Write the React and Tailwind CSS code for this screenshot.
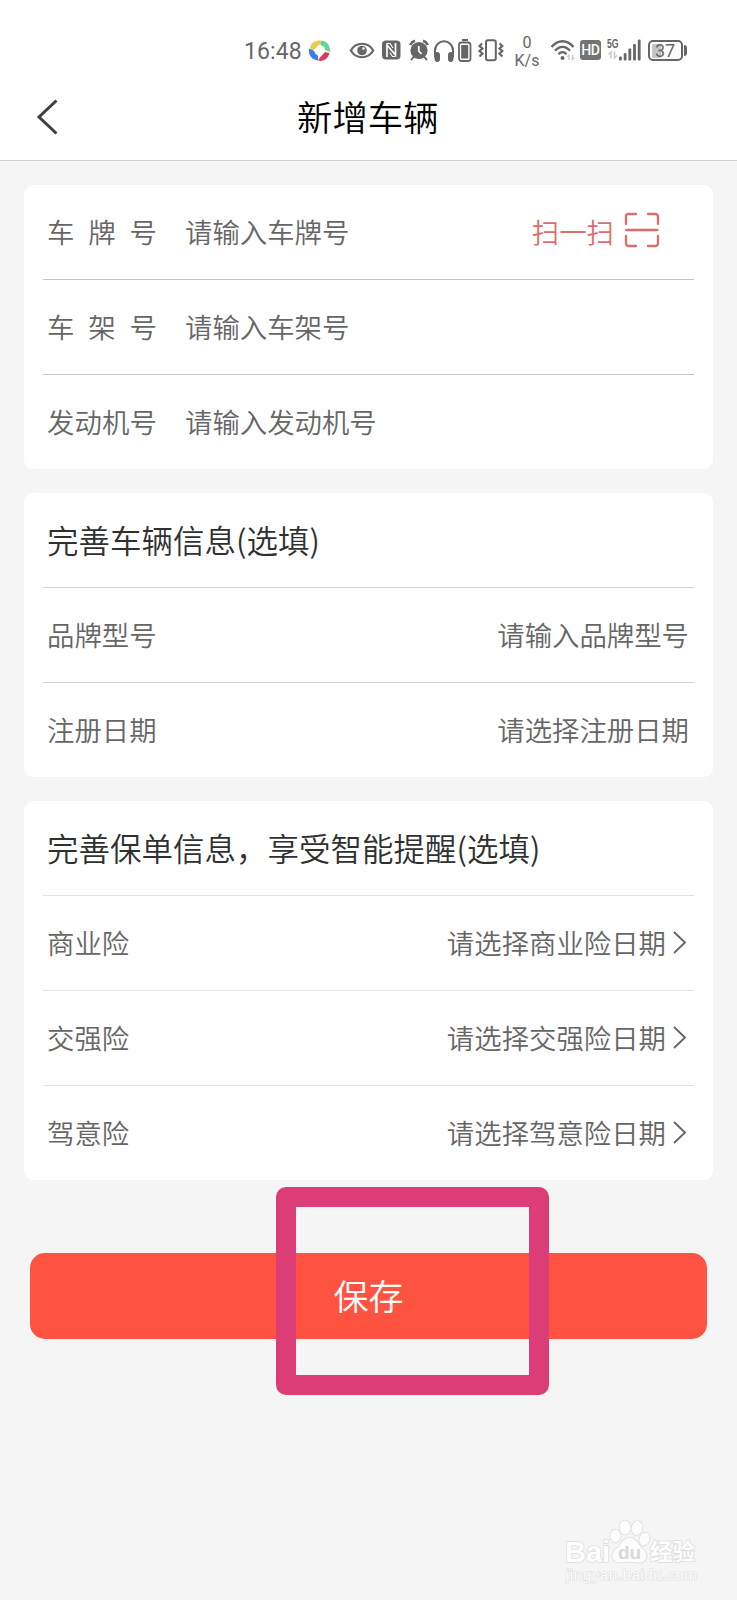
import React from 'react';

const StatusBar = () => {
  return (
    <div className="flex h-[80px] items-start pl-[244px] pt-[35px] font-[Roboto,sans-serif] font-normal text-[#666666]">
      <span className="mt-[3px] w-[64px] text-[23px] leading-[27px] tracking-[0.1px]">16:48</span>

      {/* app notification */}
      <svg className="mt-[4px]" width="24" height="24" viewBox="0 0 24 24">
        <path d="M2 9C3 3 8 1 14 1.500L11 7L5 11Z" fill="#ecc94f" />
        <path d="M14 1.500C20 3 22 7 22 13L17 11L12 5Z" fill="#62d493" />
        <path d="M1 9.500C0 16 4 21 10 21.500L10 17L5 11Z" fill="#3c7de8" />
        <path d="M10 21.500C15 23 20 20 21.500 14L17 13L13 17Z" fill="#dc3b5c" />
        <path d="M11 5.500L16.500 8L17 12.500L13 17.500L7.500 15L6.500 10.500Z" fill="#fff" />
      </svg>

      {/* eye */}
      <svg className="ml-[17px] mt-[7px]" width="26" height="17" viewBox="0 0 26 17" fill="none" stroke="currentColor">
        <path d="M1.800 8.500C7 -0.500 19 -0.500 24.200 8.500C19 17.500 7 17.500 1.800 8.500Z" strokeWidth="2.200" />
        <circle cx="13" cy="8.500" r="4.800" fill="currentColor" stroke="none" />
        <circle cx="14.500" cy="6.500" r="1.300" fill="#fff" stroke="none" />
      </svg>

      {/* nfc */}
      <svg className="ml-[7px] mt-[5px]" width="19" height="20" viewBox="0 0 19 20">
        <rect x="0" y="0.500" width="18.500" height="19" rx="4" fill="currentColor" />
        <path d="M5 17V5L13.500 15V3" fill="none" stroke="#fff" strokeWidth="1.700" />
        <path d="M5 3.500H8L11 8M13.500 16.500H10.500L7.800 12.500" fill="none" stroke="#fff" strokeWidth="1.100" />
      </svg>

      {/* alarm */}
      <svg className="ml-[8px] mt-[4px]" width="20" height="22" viewBox="0 0 20 22" stroke="currentColor" fill="none">
        <circle cx="10" cy="11.500" r="8.600" fill="currentColor" stroke="none" />
        <path d="M1.200 6A8 8 0 0 1 6 1.800M14 1.800A8 8 0 0 1 18.800 6" strokeWidth="2.600" />
        <path d="M4.500 18L2.500 20.500M15.500 18L17.500 20.500" strokeWidth="2" strokeLinecap="round" />
        <path d="M9.800 7V12L12.500 15" stroke="#fff" strokeWidth="1.700" />
      </svg>

      {/* headphones */}
      <svg className="ml-[4px] mt-[4px]" width="22" height="24" viewBox="0 0 22 24" fill="none" stroke="currentColor">
        <path d="M2 18V12C2 -1 20 -1 20 12V18" strokeWidth="2" />
        <rect x="2" y="13.500" width="4.500" height="9" rx="2" fill="currentColor" />
        <rect x="15.500" y="13.500" width="4.500" height="9" rx="2" fill="currentColor" />
      </svg>

      {/* device battery */}
      <svg className="ml-[3px] mt-[4px]" width="14" height="24" viewBox="0 0 14 24" fill="none" stroke="currentColor">
        <path d="M4 1H10" strokeWidth="2" />
        <rect x="1" y="3.500" width="11.500" height="18.500" rx="2.500" strokeWidth="1.800" />
        <rect x="3.200" y="6" width="7" height="13.500" fill="currentColor" stroke="none" />
      </svg>

      {/* vibrate */}
      <svg className="ml-[6px] mt-[4px]" width="26" height="23" viewBox="0 0 26 23" fill="none" stroke="currentColor">
        <rect x="8" y="1.200" width="9.800" height="20" rx="2" strokeWidth="2" />
        <path d="M4 4.500L1.500 7L4.500 9.500L1.500 12L4.500 14.500L1.500 17.500" strokeWidth="2.200" />
        <path d="M21.500 4.500L24.300 7L21.500 9.500L24.300 12L21.500 14.500L24.300 17.500" strokeWidth="2.200" />
      </svg>

      <div className="ml-[6px] flex w-[34px] flex-col items-center text-[16px] leading-[18px]">
        <span className="-mt-[1px]">0</span>
        <span>K/s</span>
      </div>

      {/* wifi */}
      <svg className="ml-[6px] mt-[4px]" width="26" height="23" viewBox="0 0 26 23" fill="none" stroke="currentColor" strokeWidth="2.300">
        <path d="M1.500 8C8 0.300 17 0.300 23.500 8" />
        <path d="M5 11.800C9.500 6.500 15.500 6.500 20 11.800" />
        <path d="M8.500 15.300C11 12.500 14 12.500 16.500 15.300" />
        <circle cx="12.500" cy="19" r="2" fill="currentColor" stroke="none" />
        <path d="M19 21V16L17 18M22.500 15.500V20.500L24.500 18.500" stroke="#c9c9c9" strokeWidth="1.300" />
      </svg>

      <div className="ml-[4px] mt-[5px] flex h-[20px] w-[20.500px] items-center justify-center rounded-[3px] bg-[#747474] text-[14px] font-medium tracking-[-0.500px] text-white">
        HD
      </div>

      {/* 5G signal */}
      <div className="ml-[6px] mt-[3px] w-[12px]">
        <div className="h-[12px] font-['Liberation_Sans'] text-[12px] font-bold leading-[13px]">
          <span className="inline-block origin-left scale-x-[0.72]">5G</span>
        </div>
        <svg width="12" height="9" viewBox="0 0 12 9" fill="none" stroke="#c9c9c9" strokeWidth="1.500">
          <path d="M4 8.500V2L1.500 4.500M7.500 1.500V8L10 5.500" />
        </svg>
      </div>
      <svg className="mt-[4px]" width="22" height="22" viewBox="0 0 22 22" fill="currentColor">
        <rect x="0" y="17.500" width="2.800" height="4" rx="1" />
        <rect x="4.700" y="14" width="2.800" height="7.500" rx="1" />
        <rect x="9.400" y="9.500" width="2.800" height="12" rx="1" />
        <rect x="14.100" y="5" width="2.800" height="16.500" rx="1" />
        <rect x="18.800" y="0.500" width="2.800" height="21" rx="1" />
      </svg>

      {/* battery level */}
      <div className="ml-[7px] mt-[5px] flex items-center">
        <div className="flex h-[21px] w-[35px] items-center justify-center rounded-[5px] border-2 border-[#666666] bg-[linear-gradient(90deg,#c4c4c4_36%,transparent_36%)] bg-clip-content p-[1.500px] text-[18px] leading-none">
          37
        </div>
        <div className="ml-[1.500px] h-[11px] w-[2.500px] rounded-r bg-[#666666]" />
      </div>
    </div>
  );
};

const Header = () => {
  return (
    <div className="flex h-[80px] items-center">
      <svg className="ml-[36px] -mt-[6px]" width="22" height="36" viewBox="0 0 22 36" fill="none" stroke="#3f3f3f" strokeWidth="3">
        <path d="M20.500 1.500L3 18L20.500 34.500" />
      </svg>
      <h1 className="-mt-[8px] ml-[239px] text-[35.400px] leading-[50px] text-black">新增车辆</h1>
    </div>
  );
};

const ScanIcon = () => (
  <svg width="36" height="36" viewBox="0 0 36 36" fill="none" stroke="#db6e6b" strokeWidth="2.300" strokeLinecap="round">
    <path d="M2 12V4Q2 2 4 2H12M24 2H31Q34 2 34 5V12M2 24V31Q2 34 5 34H12M24 34H31Q34 34 34 31V24" />
    <path d="M2 18H33.500" />
  </svg>
);

const Chevron = () => (
  <svg className="ml-[6px] mr-[2px]" width="15" height="24" viewBox="0 0 15 24" fill="none" stroke="#666666" strokeWidth="1.900">
    <path d="M2 2L13 12.500L2 23" />
  </svg>
);

const Card = ({ children, divider }) => (
  <div className={`mx-[24px] mb-[24px] divide-y rounded-[9px] bg-white px-[19px] ${divider}`}>{children}</div>
);

const Row = ({ children }) => (
  <div className="flex h-[95px] items-center pb-[2px] pl-[4px] pr-[5px] text-[27.400px] leading-[40px] text-[#666666] last:h-[94px]">
    {children}
  </div>
);

const CardTitle = ({ children }) => (
  <div className="flex h-[95px] items-center pb-[3px] pl-[4px] text-[31.500px] leading-[46px] text-[#303030]">{children}</div>
);

const plateFields = [
  { label: ['车', '牌', '号'], placeholder: '请输入车牌号', scan: true },
  { label: ['车', '架', '号'], placeholder: '请输入车架号' },
  { label: ['发', '动', '机', '号'], placeholder: '请输入发动机号' },
];

const vehicleFields = [
  { label: '品牌型号', placeholder: '请输入品牌型号' },
  { label: '注册日期', placeholder: '请选择注册日期' },
];

const policyFields = [
  { label: '商业险', placeholder: '请选择商业险日期' },
  { label: '交强险', placeholder: '请选择交强险日期' },
  { label: '驾意险', placeholder: '请选择驾意险日期' },
];

const Watermark = () => (
  <svg
    className="absolute left-[560px] top-[1514px]"
    width="145"
    height="72"
    viewBox="0 0 145 72"
    fill="#fdfdfd"
    stroke="#dddddd"
    strokeWidth="1.600"
    style={{ paintOrder: 'stroke' }}
  >
    <text x="5" y="47.500" fontFamily="Liberation Sans" fontWeight="700" fontSize="29">Bai</text>
    <ellipse cx="55.500" cy="22" rx="5.200" ry="6.500" />
    <ellipse cx="65" cy="13.500" rx="5.300" ry="7" />
    <ellipse cx="77" cy="14" rx="5.300" ry="7" transform="rotate(12 77 14)" />
    <ellipse cx="84.500" cy="25" rx="5" ry="6.500" transform="rotate(20 84.500 25)" />
    <path d="M69.500 24C62 24 62 31 56 35C49 41 53 49 61 48.500C67 47.500 72 47.500 78 48.500C87 49.500 89 41 83 35C77 30 77 24 69.500 24Z" />
    <text x="58" y="45" fontFamily="Liberation Sans" fontSize="19" fill="#d9d9d9" stroke="none" fontWeight="700">du</text>
    <text x="90" y="46" fontFamily="Noto Sans CJK SC" fontWeight="700" fontSize="22.500">经验</text>
    <text x="6" y="65.500" fontFamily="Liberation Sans" fontSize="15.500" strokeWidth="1.200" textLength="131">jingyan.baidu.com</text>
  </svg>
);

const App = () => {
  return (
    <div className="relative h-[1600px] w-[737px] overflow-hidden bg-[#f5f5f5] font-['Noto_Sans_CJK_SC',sans-serif] font-[350]">
      <div className="mb-[24px] border-b border-[#d0d0d0] bg-white">
        <StatusBar />
        <Header />
      </div>

      <Card divider="divide-[#c4c4c4]">
        {plateFields.map((field) => (
          <Row key={field.placeholder}>
            <div className="flex w-[110px] justify-between">
              {field.label.map((char) => (
                <span key={char}>{char}</span>
              ))}
            </div>
            <span className="ml-[28px]">{field.placeholder}</span>
            {field.scan && (
              <div className="ml-auto mr-[29px] flex items-center gap-[10px] text-[#db6e6b]">
                <span>扫一扫</span>
                <div className="-mt-[3px]">
                  <ScanIcon />
                </div>
              </div>
            )}
          </Row>
        ))}
      </Card>

      <Card divider="divide-[#d2d2d2]">
        <CardTitle>完善车辆信息(选填)</CardTitle>
        {vehicleFields.map((field) => (
          <Row key={field.label}>
            <span>{field.label}</span>
            <span className="ml-auto">{field.placeholder}</span>
          </Row>
        ))}
      </Card>

      <Card divider="divide-[#e2e2e2]">
        <CardTitle>完善保单信息，享受智能提醒(选填)</CardTitle>
        {policyFields.map((field) => (
          <Row key={field.label}>
            <span>{field.label}</span>
            <span className="ml-auto">{field.placeholder}</span>
            <Chevron />
          </Row>
        ))}
      </Card>

      <button className="mx-[30px] mt-[73px] flex h-[86px] w-[677px] items-center justify-center rounded-[15px] bg-[#ff5341] pb-[2px] text-[35px] leading-[50px] text-white">
        保存
      </button>

      {/* highlight around the save button */}
      <div className="absolute left-[276px] top-[1187px] h-[208px] w-[273px] rounded-[10px] border-[20px] border-[#dc3d77]" />

      <Watermark />
    </div>
  );
};

export default App;
